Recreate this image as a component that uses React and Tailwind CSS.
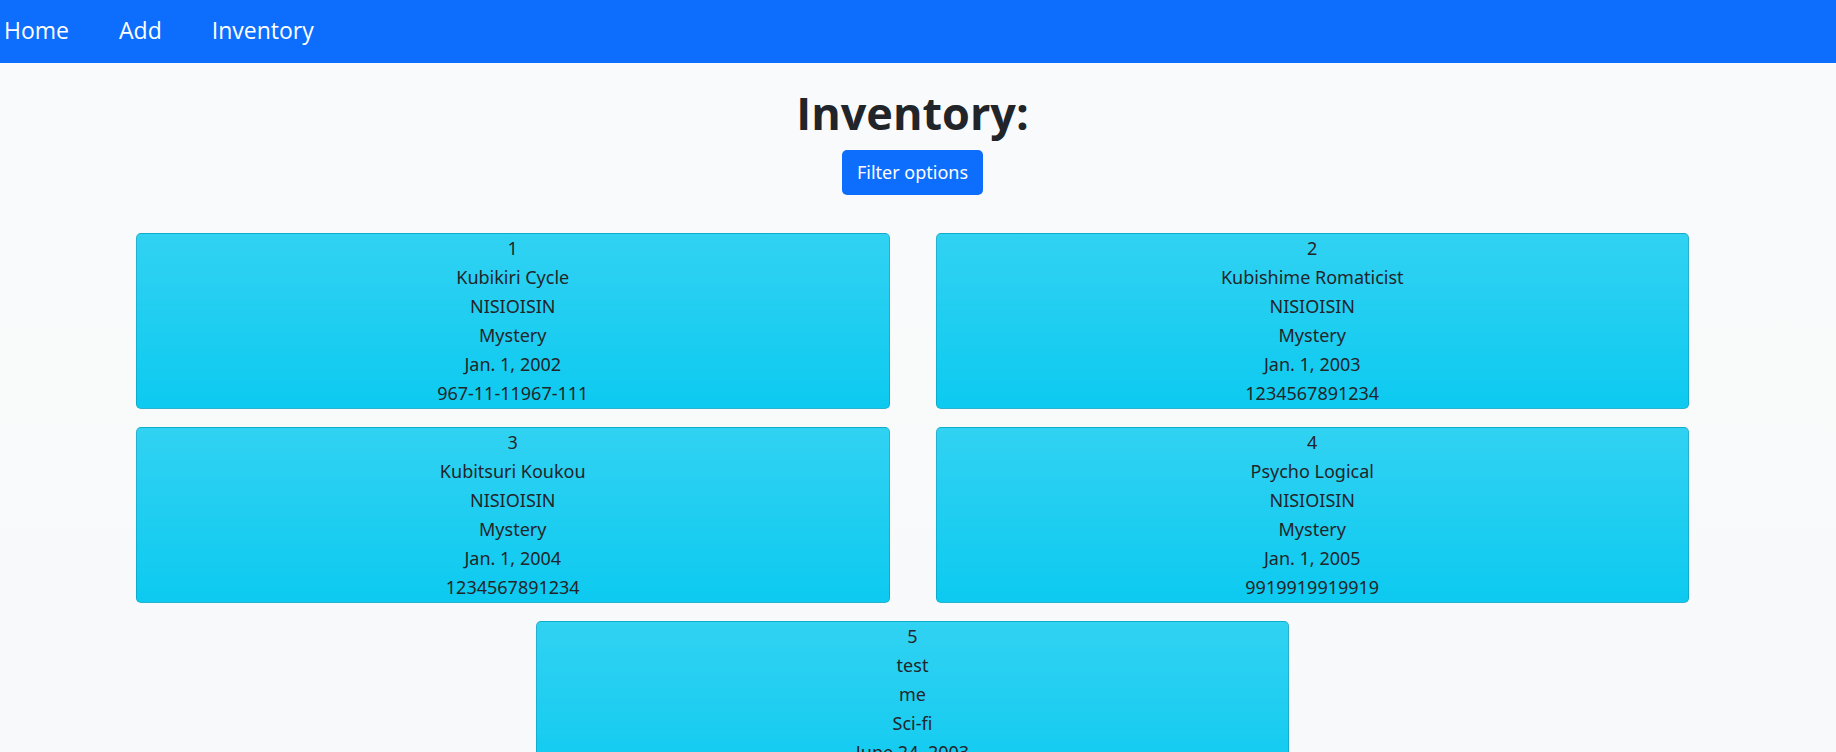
const links = ["Home", "Add", "Inventory"];

const books = [
  { id: 1, title: "Kubikiri Cycle", author: "NISIOISIN", genre: "Mystery", date: "Jan. 1, 2002", isbn: "967-11-11967-111" },
  { id: 2, title: "Kubishime Romaticist", author: "NISIOISIN", genre: "Mystery", date: "Jan. 1, 2003", isbn: "1234567891234" },
  { id: 3, title: "Kubitsuri Koukou", author: "NISIOISIN", genre: "Mystery", date: "Jan. 1, 2004", isbn: "1234567891234" },
  { id: 4, title: "Psycho Logical", author: "NISIOISIN", genre: "Mystery", date: "Jan. 1, 2005", isbn: "9919919919919" },
  { id: 5, title: "test", author: "me", genre: "Sci-fi", date: "June 24, 2003", isbn: "1234567891234" },
];

function NavBar() {
  return (
    <nav className="flex h-[63px] items-center gap-[50px] bg-[#0d6efd] px-[4px] pb-[4px] font-['Open_Sans',sans-serif] text-[23px] leading-[36px] text-white">
      {links.map((label) => (
        <a key={label} href={"#" + label.toLowerCase()}>{label}</a>
      ))}
    </nav>
  );
}

function BookCard({ book }) {
  return (
    <li className="w-[calc(50%-23px)] rounded-[5px] border border-black/15 bg-[#0dcaf0] bg-linear-to-b from-white/15 to-transparent text-center text-[18px] leading-[29px]">
      <p>{book.id}</p>
      <p>{book.title}</p>
      <p>{book.author}</p>
      <p>{book.genre}</p>
      <p>{book.date}</p>
      <p>{book.isbn}</p>
    </li>
  );
}

export default function App() {
  return (
    <div className="h-screen overflow-y-auto bg-[#f8f9fb] bg-linear-to-b from-[#f9fafd] via-[#f9fafa] to-[#f8f9fb] font-['Noto_Sans',sans-serif] text-[#212529]">
      <NavBar />
      <main className="pr-[11px]">
        <header className="flex flex-col items-center pt-[21px]">
          <h1 className="font-['Open_Sans',sans-serif] text-[45px] leading-[58px] font-bold">Inventory:</h1>
          <button type="button" className="mt-[8px] rounded-[5px] bg-[#0d6efd] px-[15px] py-[8px] text-[18px] leading-[29px] text-white">
            Filter options
          </button>
        </header>
        <ul className="mt-[38px] flex flex-wrap justify-center gap-x-[46px] gap-y-[18px] px-[136px]">
          {books.map((book) => (
            <BookCard key={book.id} book={book} />
          ))}
        </ul>
      </main>
    </div>
  );
}
